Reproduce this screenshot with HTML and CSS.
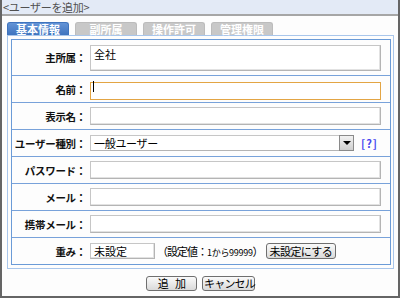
FILE: index.html
```html
<!DOCTYPE html>
<html lang="ja">
<head>
    <meta charset="UTF-8">
    <title>ユーザーを追加</title>
    <link rel="stylesheet" href="styles.css">
</head>
<body>
    <div class="window">
        <div class="title-bar">&lt;ユーザーを追加&gt;</div>

        <div class="content">
            <ul class="tabs">
                <li class="tab active">基本情報</li>
                <li class="tab">副所属</li>
                <li class="tab">操作許可</li>
                <li class="tab">管理権限</li>
            </ul>

            <div class="panel">
                <div class="form-table">
                    <div class="form-row row-tall">
                        <div class="form-label">主所属：</div>
                        <div class="form-field">
                            <div class="text-box">全社</div>
                        </div>
                    </div>

                    <div class="form-row">
                        <label class="form-label" for="name">名前：</label>
                        <div class="form-field">
                            <span class="focus-wrap">
                                <input type="text" id="name" class="text-input focused">
                            </span>
                        </div>
                    </div>

                    <div class="form-row">
                        <label class="form-label" for="display">表示名：</label>
                        <div class="form-field">
                            <input type="text" id="display" class="text-input">
                        </div>
                    </div>

                    <div class="form-row">
                        <div class="form-label">ユーザー種別：</div>
                        <div class="form-field">
                            <div class="select">
                                <span class="select-value">一般ユーザー</span>
                                <span class="select-btn"></span>
                            </div>
                            <span class="help">[?]</span>
                        </div>
                    </div>

                    <div class="form-row">
                        <label class="form-label" for="password">パスワード：</label>
                        <div class="form-field">
                            <input type="password" id="password" class="text-input">
                        </div>
                    </div>

                    <div class="form-row">
                        <label class="form-label" for="mail">メール：</label>
                        <div class="form-field">
                            <input type="text" id="mail" class="text-input">
                        </div>
                    </div>

                    <div class="form-row">
                        <label class="form-label" for="mobile">携帯メール：</label>
                        <div class="form-field">
                            <input type="text" id="mobile" class="text-input">
                        </div>
                    </div>

                    <div class="form-row">
                        <label class="form-label" for="weight">重み：</label>
                        <div class="form-field">
                            <input type="text" id="weight" class="text-input weight-input" value="未設定">
                            <span class="weight-note">（設定値：<small>1から99999</small>）</span>
                            <button type="button" class="btn">未設定にする</button>
                        </div>
                    </div>
                </div>
            </div>

            <div class="actions">
                <button type="button" class="btn btn-add">追 加</button>
                <button type="button" class="btn btn-cancel">キャンセル</button>
            </div>
        </div>
    </div>
</body>
</html>
```

FILE: styles.css
```css
* {
    margin: 0;
    padding: 0;
    box-sizing: border-box;
    font-family: "Noto Sans CJK JP", sans-serif;
}

body {
    background-color: #ffffff;
}

.window {
    width: 400px;
    height: 298px;
    border: 2px solid #656565;
    border-top: none;
    background-color: #fdfdfd;
}

.title-bar {
    height: 16px;
    background-color: #e3eaf6;
    border-bottom: 2px solid #a6a6a6;
    font-size: 11px;
    line-height: 14px;
    color: #505050;
    padding-left: 1px;
    letter-spacing: -0.3px;
}

.content {
    padding: 6px 4px 0 5px;
}

/* Tabs */
.tabs {
    display: flex;
    gap: 6px;
    list-style: none;
    height: 13px;
}

.tab {
    width: 62px;
    height: 13px;
    font-size: 11px;
    line-height: 12px;
    font-weight: bold;
    color: #ffffff;
    text-align: center;
    background-color: #c8c8c8;
    border: 1px solid #bcbcbc;
    border-bottom: none;
    border-radius: 3px 3px 0 0;
}

.tab.active {
    background: linear-gradient(#6393d6, #3f74be);
    border-color: #3f74be;
}

/* Form panel */
.panel {
    border: 1px solid #a9c6eb;
    padding: 3px 2px 3px 3px;
}

.form-table {
    border: 1px solid #6b9bd7;
}

.form-row {
    display: grid;
    grid-template-columns: 78px 1fr;
    align-items: center;
    height: 27px;
    border-top: 1px solid #78a2da;
}

.form-row.row-tall {
    height: 35px;
    border-top: none;
}

.form-label {
    display: block;
    font-size: 10.5px;
    letter-spacing: -0.3px;
    font-weight: bold;
    color: #111111;
    text-align: right;
    padding-right: 4px;
    white-space: nowrap;
}

.form-field {
    display: flex;
    align-items: center;
}

.text-input,
.text-box {
    width: 291px;
    height: 18px;
    border: 1px solid #c6c6c6;
    border-right-color: #b4b4b4;
    border-bottom-color: #b4b4b4;
    box-shadow: inset -1px -1px 0 #e2e2e2;
    background-color: #ffffff;
    font-size: 11px;
    padding: 0 3px;
    color: #000000;
    outline: none;
}

.text-box {
    height: 26px;
    padding: 1px 3px;
    line-height: 14px;
}

.focus-wrap {
    position: relative;
    display: block;
}

.text-input.focused {
    border: 1px solid #e3a544;
    box-shadow: none;
}

.focus-wrap::after {
    content: "";
    position: absolute;
    left: 3px;
    top: 4px;
    width: 1px;
    height: 11px;
    background-color: #000000;
}

/* Select */
.select {
    display: flex;
    align-items: center;
    justify-content: space-between;
    width: 264px;
    height: 16px;
    border: 1px solid #c6c6c6;
    border-bottom-color: #b4b4b4;
    background-color: #ffffff;
}

.select-value {
    font-size: 11px;
    line-height: 14px;
    padding-left: 3px;
    letter-spacing: -0.3px;
}

.select-btn {
    position: relative;
    width: 15px;
    height: 16px;
    margin-right: -1px;
    border: 1px solid #8a8a8a;
    background: linear-gradient(#f2f2f2, #cfcfcf);
}

.select-btn::after {
    content: "";
    position: absolute;
    left: 3px;
    top: 5px;
    border-left: 4px solid transparent;
    border-right: 4px solid transparent;
    border-top: 4px solid #000000;
}

.help {
    margin-left: 7px;
    font-size: 11px;
    font-weight: bold;
    letter-spacing: 1px;
    color: #4646f0;
}

/* Weight row */
.weight-input {
    width: 65px;
    height: 16px;
}

.weight-note {
    font-size: 11px;
    margin-left: 2px;
    letter-spacing: -1px;
    white-space: nowrap;
}

.weight-note small {
    font-size: 9px;
    letter-spacing: -0.3px;
}

.btn {
    height: 16px;
    padding: 0 3px;
    font-size: 11px;
    line-height: 14px;
    letter-spacing: -0.6px;
    color: #000000;
    border: 1px solid #6f6f6f;
    border-radius: 3px;
    background: linear-gradient(#fafafa, #dadada);
    white-space: nowrap;
}

.weight-note + .btn {
    margin-left: 3px;
}

/* Bottom buttons */
.actions {
    display: flex;
    justify-content: center;
    gap: 5px;
    margin-top: 7px;
}

.btn-add,
.btn-cancel {
    height: 15px;
    line-height: 13px;
}

.btn-add {
    width: 51px;
    word-spacing: 5px;
}

.btn-cancel {
    width: 53px;
    padding: 0 1px;
    letter-spacing: -0.8px;
}
```
